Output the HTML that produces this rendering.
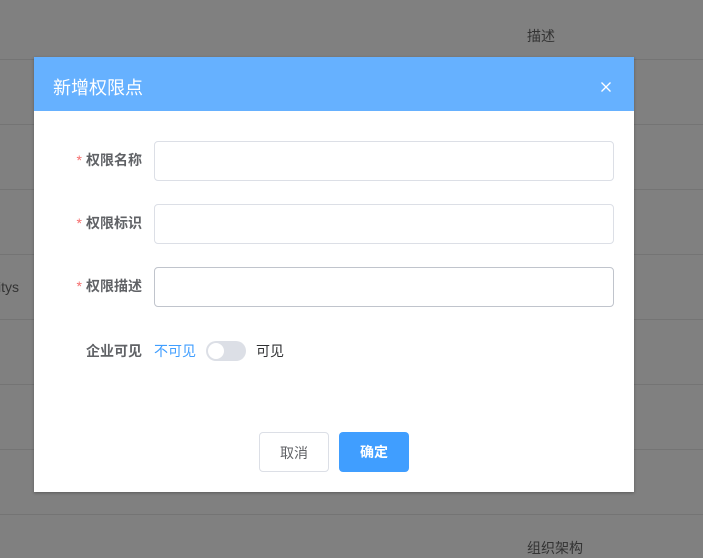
<!DOCTYPE html>
<html><head><meta charset="utf-8"><style>
*{margin:0;padding:0;box-sizing:border-box}
body{width:703px;height:556px;overflow:hidden;background:#808080;position:relative;font-family:"Liberation Sans","Noto Sans CJK SC",sans-serif}
.line{position:absolute;left:0;width:703px;height:1px;background:#747474}
.bgt{position:absolute;color:#333;font-size:14px}
.dlg{position:absolute;left:34px;top:57px;width:600px;height:435px;background:#fff;box-shadow:0 1px 3px rgba(0,0,0,.3)}
.hd{height:54px;background:#66b1ff;color:#fff;font-size:18px;line-height:62px;padding-left:19px;position:relative}
.x{position:absolute;left:567px;top:25px;width:10px;height:10px}
.lbl{position:absolute;left:0;width:108px;text-align:right;font-size:14px;font-weight:bold;color:#606266;line-height:20px}
.lbl i{color:#f56c6c;font-style:normal;font-weight:normal;margin-right:4px}
.inp{position:absolute;left:120px;width:460px;height:40px;border:1px solid #dcdfe6;border-radius:4px}
.btn{position:absolute;top:375px;height:40px;border-radius:4px;font-size:14px;text-align:center;line-height:40px}
</style></head><body>
<div class="line" style="top:59px"></div>
<div class="line" style="top:124px"></div>
<div class="line" style="top:189px"></div>
<div class="line" style="top:254px"></div>
<div class="line" style="top:319px"></div>
<div class="line" style="top:384px"></div>
<div class="line" style="top:449px"></div>
<div class="line" style="top:514px"></div>
<div class="bgt" style="left:527px;top:26px">描述</div>
<div class="bgt" style="left:-2px;top:279px">itys</div>
<div class="bgt" style="left:527px;top:538px">组织架构</div>
<div class="dlg">
<div class="hd">新增权限点<svg class="x" viewBox="0 0 10 10"><path d="M0.5 0.5L9.5 9.5M9.5 0.5L0.5 9.5" stroke="#fff" stroke-width="1.3"/></svg></div>
<div class="lbl" style="top:93px"><i>*</i>权限名称</div>
<div class="inp" style="top:84px"></div>
<div class="lbl" style="top:156px"><i>*</i>权限标识</div>
<div class="inp" style="top:147px"></div>
<div class="lbl" style="top:219px"><i>*</i>权限描述</div>
<div class="inp" style="top:210px;border-color:#c0c4cc"></div>
<div class="lbl" style="top:284px">企业可见</div>
<div style="position:absolute;left:120px;top:284px;font-size:14px;line-height:20px;color:#409eff">不可见</div>
<div style="position:absolute;left:172px;top:284px;width:40px;height:20px;border-radius:10px;background:#dcdfe6"><div style="position:absolute;left:2px;top:2px;width:16px;height:16px;border-radius:50%;background:#fff"></div></div>
<div style="position:absolute;left:222px;top:284px;font-size:14px;line-height:20px;color:#303133">可见</div>
<div class="btn" style="left:225px;width:70px;border:1px solid #dcdfe6;color:#606266">取消</div>
<div class="btn" style="left:305px;width:70px;background:#409eff;color:#fff;font-weight:bold">确定</div>
</div>
</body></html>
